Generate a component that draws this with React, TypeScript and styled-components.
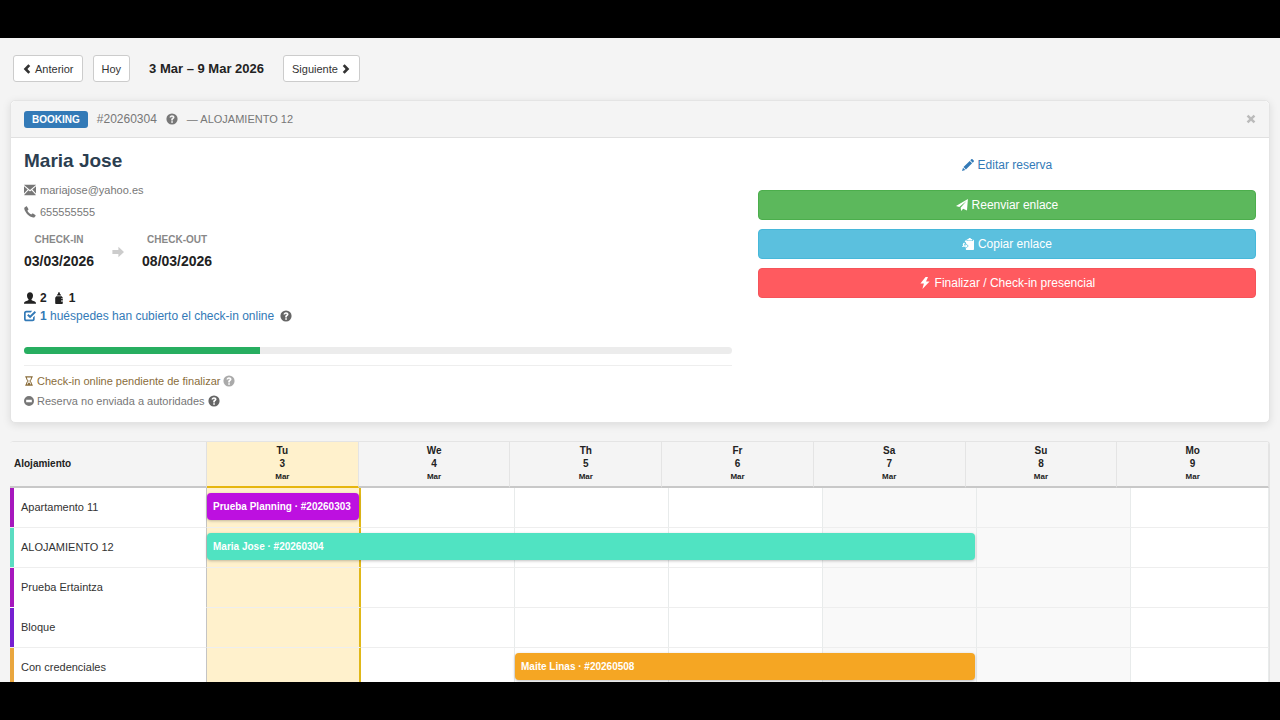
import React from "react";
import styled, { createGlobalStyle } from "styled-components";

const GlobalStyle = createGlobalStyle`
  * { box-sizing: border-box; }
  body {
    margin: 0;
    background: #000;
    color: #222;
    font-family: "Liberation Sans", Arial, sans-serif;
    font-size: 12px;
  }
  button, a { font-family: inherit; }
`;

const Frame = styled.div`
  display: flex;
  height: 100vh;
  padding: 38px 0;
  background: #000;
`;

const Screen = styled.main`
  flex: 1;
  min-width: 0;
  overflow: hidden;
  background: #f4f4f4;
`;

const Glyph = styled.svg<{ $size?: number }>`
  flex: none;
  width: ${(p) => p.$size ?? 12}px;
  height: ${(p) => p.$size ?? 12}px;
  fill: currentColor;
`;

const Toolbar = styled.nav`
  display: flex;
  align-items: center;
  gap: 10px;
  padding: 17px 13px 18px;
`;

const NavButton = styled.button`
  display: flex;
  align-items: center;
  gap: 3px;
  height: 27px;
  padding: 0 8px;
  border: 1px solid #ccc;
  border-radius: 3px;
  background: #fff;
  color: #333;
  font-size: 11px;
`;

const RangeTitle = styled.h1`
  margin: 0 9px;
  font-size: 13px;
  line-height: 18px;
`;

const Card = styled.section`
  margin: 0 10px 18px;
  border: 1px solid #e4e4e4;
  border-radius: 5px;
  background: #fff;
  box-shadow: 0 2px 8px rgba(0, 0, 0, 0.1);
`;

const CardHeader = styled.header`
  display: flex;
  align-items: center;
  gap: 9px;
  height: 37px;
  padding: 0 13px;
  border-bottom: 1px solid #e0e0e0;
  border-radius: 5px 5px 0 0;
  background: #f4f4f4;
  color: #777;
`;

const SourceTag = styled.span`
  padding: 0 8px;
  border-radius: 3px;
  background: #337ab7;
  color: #fff;
  font-size: 10px;
  font-weight: bold;
  line-height: 17px;
`;

const RoomName = styled.span`
  font-size: 11px;
`;

const CloseButton = styled.button`
  display: flex;
  margin-left: auto;
  padding: 0;
  border: 0;
  background: none;
  color: #bbb;
`;

const CardBody = styled.div`
  display: grid;
  grid-template-columns: repeat(12, minmax(0, 1fr));
  column-gap: 26px;
  padding: 12px 13px 11px;
`;

const Details = styled.div`
  grid-column: span 7;
`;

const Actions = styled.div`
  display: flex;
  flex-direction: column;
  grid-column: span 5;
  gap: 9px;
`;

const GuestName = styled.h2`
  margin: 0 0 7px;
  color: #2c3e50;
  font-size: 19px;
  line-height: 22px;
`;

const Contact = styled.div`
  display: flex;
  align-items: center;
  gap: 4px;
  color: #777;
  font-size: 11px;
  line-height: 22px;
`;

const Stay = styled.div`
  display: flex;
  align-items: center;
  gap: 18px;
  margin: 9px 0 18px;
  color: #ccc;
`;

const StayDate = styled.div`
  color: #222;
  font-size: 14px;
  font-weight: bold;
  line-height: 20px;
  text-align: center;
`;

const StayLabel = styled.div`
  margin-bottom: 3px;
  color: #888;
  font-size: 10px;
  line-height: 16px;
`;

const Guests = styled.div`
  display: flex;
  align-items: center;
  gap: 4px;
  font-weight: bold;
  line-height: 18px;
`;

const GuestCount = styled.span`
  margin-right: 2px;
`;

const OnlineRow = styled.div`
  display: flex;
  align-items: center;
  gap: 6px;
  color: #666;
  line-height: 18px;
`;

const TextLink = styled.a`
  display: inline-flex;
  align-items: center;
  gap: 4px;
  color: #337ab7;
  text-decoration: none;
`;

const Progress = styled.div`
  height: 7px;
  margin: 22px 0 11px;
  overflow: hidden;
  border-radius: 4px;
  background: #ececec;
`;

const ProgressFill = styled.div`
  height: 100%;
  background: #27ae60;
`;

const StatusList = styled.div`
  padding-top: 5px;
  border-top: 1px solid #eee;
`;

const Status = styled.div<{ $color: string }>`
  display: flex;
  align-items: center;
  gap: 3px;
  color: ${(p) => p.$color};
  font-size: 11px;
  line-height: 20px;
`;

const Help = styled.span<{ $color: string }>`
  display: inline-flex;
  color: ${(p) => p.$color};
`;

const EditRow = styled.div`
  display: flex;
  justify-content: center;
  padding: 6px 0 7px;
  line-height: 18px;
`;

const ActionButton = styled.button<{ $fill: string; $edge: string }>`
  display: flex;
  align-items: center;
  justify-content: center;
  gap: 4px;
  height: 30px;
  padding: 0;
  border: 1px solid ${(p) => p.$edge};
  border-radius: 4px;
  background: ${(p) => p.$fill};
  color: #fff;
  font-size: 12px;
`;

const Planning = styled.table`
  display: block;
  margin: 0 10px;
  border: 1px solid #e4e4e4;
  border-width: 1px 1px 0 0;
  border-radius: 4px 4px 0 0;
  overflow: hidden;
  background: #fff;
`;

const Head = styled.thead`
  display: block;
`;

const Body = styled.tbody`
  display: block;
`;

const HeadRow = styled.tr`
  display: grid;
  grid-template-columns: 197px repeat(7, minmax(0, 1fr));
  height: 46px;
`;

const CornerCell = styled.th`
  padding: 0 4px;
  border-bottom: 2px solid #c8c8c8;
  border-right: 1px solid #e0e0e0;
  background: #f4f4f4;
  font-size: 10px;
  line-height: 44px;
  text-align: left;
`;

const DayCell = styled.th<{ $today: boolean }>`
  padding: 2px 0 0;
  border-bottom: 2px solid ${(p) => (p.$today ? "#e6b60f" : "#c8c8c8")};
  border-right: 1px solid #e4e4e4;
  background: ${(p) => (p.$today ? "#fff1cc" : "#f4f4f4")};
  font-size: 10px;
  line-height: 13px;
`;

const Month = styled.small`
  display: block;
  font-size: 8px;
`;

const RoomRow = styled.tr`
  display: grid;
  grid-template-columns: 197px repeat(6, minmax(0, 154fr)) minmax(0, 138fr);
  height: 40px;
`;

const RoomCell = styled.th<{ $accent: string; $joined: boolean }>`
  padding: 0 7px 0 11px;
  border-right: 1px solid #c4c4c4;
  border-bottom: 1px solid ${(p) => (p.$joined ? "#fff" : "#eee")};
  box-shadow: inset 4px 0 ${(p) => p.$accent};
  color: #333;
  font-size: 11px;
  font-weight: normal;
  line-height: 39px;
  text-align: left;
`;

const slotFill = { today: "#fff1cc", weekend: "#f9f9f9", plain: "#fff" };

const Slot = styled.td<{ $kind: keyof typeof slotFill }>`
  position: relative;
  padding: 0;
  border-bottom: 1px solid #eee;
  border-right: 1px solid ${(p) => (p.$kind === "today" ? "#e0b818" : "#e8ebeb")};
  background: ${(p) => slotFill[p.$kind]};
  box-shadow: ${(p) => (p.$kind === "today" ? "inset -1px 0 #e0b818" : "none")};
`;

const Booking = styled.a<{ $days: number; $fill: string }>`
  position: absolute;
  z-index: 1;
  top: 5px;
  left: 0;
  width: calc((100% + 1px) * ${(p) => p.$days} - 2px);
  height: 27px;
  padding: 0 6px;
  overflow: hidden;
  border-radius: 4px;
  background: ${(p) => p.$fill};
  box-shadow: 0 1px 3px rgba(0, 0, 0, 0.25);
  color: #fff;
  font-size: 10px;
  font-weight: bold;
  line-height: 27px;
  text-decoration: none;
  white-space: nowrap;
`;

const icons = {
  left: "M7.6.3 9.900 2.500 6.500 6l3.400 3.500-2.300 2.200L2 6z",
  right: "M4.400.3 2.100 2.500 5.500 6 2.100 9.500l2.300 2.200L10 6z",
  question:
    "M6 .4a5.6 5.6 0 1 0 0 11.2A5.6 5.6 0 0 0 6 .4zM5.2 8.300h1.700v1.500H5.200zM6 2.200c1.500 0 2.500.8 2.500 2 0 .9-.5 1.400-1.100 1.800-.4.3-.5.5-.5.900v.5H5.200v-.6c0-.9.4-1.300.9-1.700.4-.3.6-.5.6-.800 0-.4-.3-.6-.700-.6-.5 0-.8.300-.8.9H3.500C3.500 3.100 4.500 2.200 6 2.200z",
  envelope:
    "M.1.800h11.800v.3L6 6.100.1 1.100zM0 2.300l3.700 3.200L0 9.600zM12 2.300 8.300 5.500 12 9.600zM4.500 6.200 6 7.500l1.500-1.300 4.200 4.500v.5H.3v-.5z",
  phone:
    "M.8 1.300 2.100.4c.4-.2.800-.1 1 .3l1.300 2.200c.2.4.1.8-.3 1l-.7.6c.5 1.500 2.200 3.200 3.900 4l.7-.8c.3-.3.7-.4 1-.2l2.300 1.400c.4.3.5.700.200 1.100l-.8 1.100c-.4.5-1 .600-1.600.4C5 10.500 1.400 6.800.3 2.900c-.2-.6 0-1.200.5-1.600z",
  arrow: "M6.400.7 12 6 6.400 11.300V7.900H.4V4.100h6z",
  user: "M6 .2c1.900 0 3 1.300 3 3.200 0 1.500-.6 3-1.500 3.800v.9c.3.5 3.600 1.200 4.200 2.100.3.400.3.900.3 1.600H0c0-.7 0-1.200.3-1.600.6-.9 3.900-1.600 4.200-2.100v-.9C3.600 6.400 3 4.900 3 3.400 3 1.500 4.100.2 6 .2z",
  bottle:
    "M6 0c.7.200.9.9.9 1.800l1.200 1.100v.7H3.900v-.7l1.200-1.100C5.100.9 5.300.2 6 0zM3.300 4.200h5.400l1.100 1.500v.7H8v.5h1.800v1.100H8v.5h1.800v1.100H8v.5h1.800v1.100c0 .5-.3.800-.8.800H3c-.5 0-.8-.3-.8-.8V5.700z",
  check:
    "M2.300.8h5.900L6.700 2.400H2.600c-.6 0-.9.3-.9.9v5.400c0 .6.300.9.9.9h5.500c.6 0 .9-.3.900-.9V7.500l1.700-1.700v3.300c0 1.400-.8 2.200-2.200 2.200H2.300C.9 11.300 0 10.400 0 9V3.100C0 1.700.9.800 2.300.8zM10.700 1 12 2.400 6.100 8.300 3.100 5.400l1.400-1.300L6.100 5.600z",
  hourglass:
    "M1.500.4h9v1.400h-.9c0 2-.7 3.200-2 4.200 1.300 1 2 2.200 2 4.200h.9v1.400h-9v-1.400h.9c0-2 .7-3.200 2-4.200-1.300-1-2-2.200-2-4.200h-.9zM3.600 1.800c0 1.800.6 2.700 1.800 3.500v1.400C4.200 7.500 3.600 8.400 3.600 10.200h.6c.3-1.200.9-1.800 1.800-2.300.9.500 1.500 1.100 1.800 2.300h.6c0-1.800-.6-2.700-1.800-3.500V5.300c1.200-.8 1.800-1.700 1.800-3.500z",
  minus: "M6 0a6 6 0 1 0 0 12A6 6 0 0 0 6 0zM2.600 4.600h6.800v2.800H2.600z",
  close: "M2.900.8 6 3.900 9.100.8l2.100 2.100L8.100 6l3.100 3.100-2.100 2.100L6 8.100l-3.100 3.100L.8 9.100 3.900 6 .8 2.900z",
  pencil: "M9.300.3c.4-.4.800-.4 1.200 0l1.200 1.200c.4.4.4.8 0 1.200l-1 1L8.300 1.300zM7.700 1.900l2.400 2.400-6.200 6.200-2.400-2.400zM1 8.700l2.300 2.300L0 12z",
  send: "M11.900 0 11 11.400 7.100 9.700 5.200 12 4.600 8.700 10.500 2 3.300 8.100 0 6.900z",
  copy:
    "M5.300 1.100h1.100C6.500.4 7 0 7.700 0S9 .4 9.100 1.100h1.100v1.300H5.300zM4 1.800h.6v1.300h6.300V1.800c.7 0 1.100.4 1.100 1.100V11c0 .6-.4 1-1 1H4.800c-.6 0-1-.4-1-1v-.5L6.700 8 3.800 5.200V4.100L2.600 3.900zM2.100 4.600 3 5.400C2.200 6.100 2 6.700 2.400 7.400H3.600V6.100L5.800 8 3.600 10V8.700H0V8h1.200C.4 6.800.8 5.300 2.100 4.600z",
  flash: "M6.600 0 1.400 6.600h3.500L3.400 12l7.200-7.400H7L9 0z",
};

type IconName = keyof typeof icons;

function Icon({ name, size }: { name: IconName; size?: number }) {
  return (
    <Glyph viewBox="0 0 12 12" $size={size} aria-hidden="true">
      <path fillRule="evenodd" d={icons[name]} />
    </Glyph>
  );
}

const days = [
  { name: "Tu", date: 3 },
  { name: "We", date: 4 },
  { name: "Th", date: 5 },
  { name: "Fr", date: 6 },
  { name: "Sa", date: 7 },
  { name: "Su", date: 8 },
  { name: "Mo", date: 9 },
];

const today = 3;

interface Room {
  name: string;
  accent: string;
  joined?: boolean;
  booking?: { start: number; days: number; label: string; fill: string };
}

const rooms: Room[] = [
  {
    name: "Apartamento 11",
    accent: "#a617bd",
    booking: { start: 3, days: 1, label: "Prueba Planning · #20260303", fill: "#bd10e0" },
  },
  {
    name: "ALOJAMIENTO 12",
    accent: "#5bdcc1",
    booking: { start: 3, days: 5, label: "Maria Jose · #20260304", fill: "#50e3c2" },
  },
  { name: "Prueba Ertaintza", accent: "#a617bd", joined: true },
  { name: "Bloque", accent: "#761fd0" },
  {
    name: "Con credenciales",
    accent: "#e9a63e",
    booking: { start: 5, days: 3, label: "Maite Linas · #20260508", fill: "#f5a623" },
  },
];

function slotKind(date: number, name: string): keyof typeof slotFill {
  if (date === today) return "today";
  return name === "Sa" || name === "Su" ? "weekend" : "plain";
}

export default function App() {
  const covered = 1;
  const total = 3;
  return (
    <Frame>
      <GlobalStyle />
      <Screen>
        <Toolbar>
          <NavButton type="button">
            <Icon name="left" size={10} />
            Anterior
          </NavButton>
          <NavButton type="button">Hoy</NavButton>
          <RangeTitle>3 Mar – 9 Mar 2026</RangeTitle>
          <NavButton type="button">
            Siguiente
            <Icon name="right" size={10} />
          </NavButton>
        </Toolbar>

        <Card>
          <CardHeader>
            <SourceTag>BOOKING</SourceTag>
            <span>#20260304</span>
            <Icon name="question" />
            <RoomName>— ALOJAMIENTO 12</RoomName>
            <CloseButton type="button" aria-label="Cerrar">
              <Icon name="close" size={10} />
            </CloseButton>
          </CardHeader>
          <CardBody>
            <Details>
              <GuestName>Maria Jose</GuestName>
              <Contact>
                <Icon name="envelope" />
                mariajose@yahoo.es
              </Contact>
              <Contact>
                <Icon name="phone" />
                655555555
              </Contact>
              <Stay>
                <StayDate>
                  <StayLabel>CHECK-IN</StayLabel>
                  03/03/2026
                </StayDate>
                <Icon name="arrow" />
                <StayDate>
                  <StayLabel>CHECK-OUT</StayLabel>
                  08/03/2026
                </StayDate>
              </Stay>
              <Guests>
                <Icon name="user" />
                <GuestCount>2</GuestCount>
                <Icon name="bottle" />
                <GuestCount>1</GuestCount>
              </Guests>
              <OnlineRow>
                <TextLink href="#huespedes">
                  <Icon name="check" />
                  <span>
                    <b>{covered}</b> huéspedes han cubierto el check-in online
                  </span>
                </TextLink>
                <Icon name="question" />
              </OnlineRow>
              <Progress>
                <ProgressFill style={{ width: `${(covered / total) * 100}%` }} />
              </Progress>
              <StatusList>
                <Status $color="#8a6d3b">
                  <Icon name="hourglass" size={10} />
                  Check-in online pendiente de finalizar
                  <Help $color="#aaa">
                    <Icon name="question" />
                  </Help>
                </Status>
                <Status $color="#777">
                  <Icon name="minus" size={10} />
                  Reserva no enviada a autoridades
                  <Help $color="#666">
                    <Icon name="question" />
                  </Help>
                </Status>
              </StatusList>
            </Details>
            <Actions>
              <EditRow>
                <TextLink href="#editar">
                  <Icon name="pencil" />
                  Editar reserva
                </TextLink>
              </EditRow>
              <ActionButton type="button" $fill="#5cb85c" $edge="#4cae4c">
                <Icon name="send" />
                Reenviar enlace
              </ActionButton>
              <ActionButton type="button" $fill="#5bc0de" $edge="#46b8da">
                <Icon name="copy" />
                Copiar enlace
              </ActionButton>
              <ActionButton type="button" $fill="#ff5a5f" $edge="#f5545a">
                <Icon name="flash" />
                Finalizar / Check-in presencial
              </ActionButton>
            </Actions>
          </CardBody>
        </Card>

        <Planning>
          <Head>
            <HeadRow>
              <CornerCell scope="col">Alojamiento</CornerCell>
              {days.map((day) => (
                <DayCell key={day.date} scope="col" $today={day.date === today}>
                  {day.name}
                  <br />
                  {day.date}
                  <Month>Mar</Month>
                </DayCell>
              ))}
            </HeadRow>
          </Head>
          <Body>
            {rooms.map((room) => (
              <RoomRow key={room.name}>
                <RoomCell scope="row" $accent={room.accent} $joined={!!room.joined}>
                  {room.name}
                </RoomCell>
                {days.map((day) => (
                  <Slot key={day.date} $kind={slotKind(day.date, day.name)}>
                    {room.booking?.start === day.date && (
                      <Booking href="#reserva" $days={room.booking.days} $fill={room.booking.fill}>
                        {room.booking.label}
                      </Booking>
                    )}
                  </Slot>
                ))}
              </RoomRow>
            ))}
          </Body>
        </Planning>
      </Screen>
    </Frame>
  );
}
